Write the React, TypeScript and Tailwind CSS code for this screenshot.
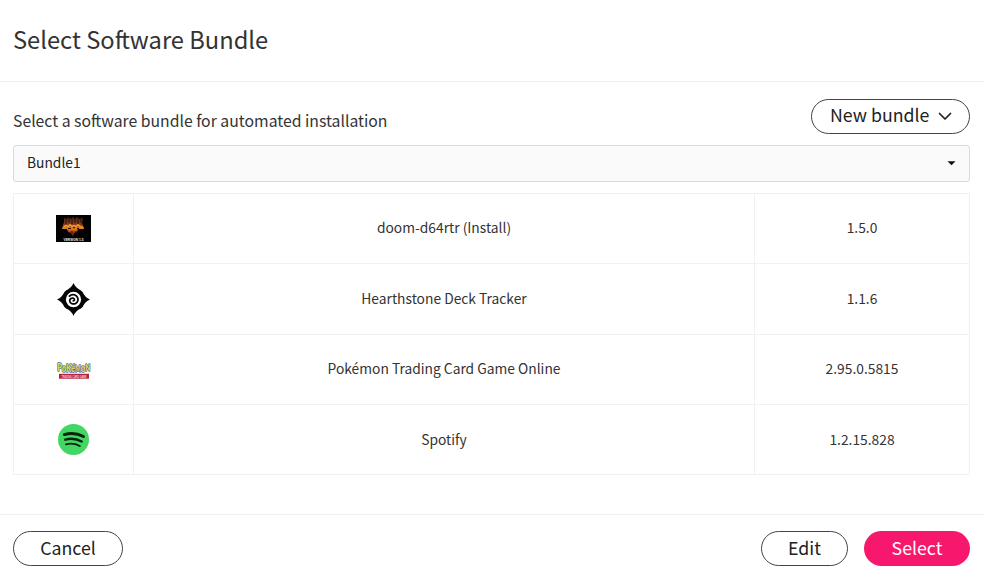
import type { ReactNode } from "react";

function DoomIcon() {
  return (
    <svg width="35" height="27" viewBox="0 0 35 27">
      <defs>
        <linearGradient id="flame" x1="0" y1="0" x2="0" y2="1">
          <stop offset="0" stopColor="#4a2418" />
          <stop offset="0.4" stopColor="#8c3f1c" />
          <stop offset="0.58" stopColor="#ee8420" />
          <stop offset="0.75" stopColor="#a03a12" />
          <stop offset="1" stopColor="#4c1008" />
        </linearGradient>
      </defs>
      <rect width="35" height="27" fill="#020202" />
      <path d="M8 3l3 1 1-2 2 2 3-2 2 2 2-2 2 2 4-1-1 5 2 6-6 0-1 3-3 1-1 4-2-4-3-1-1-3-5 0 2-7z" fill="url(#flame)" />
      <path d="M10 4v5M13 3v5M16 3v6M19 3v5M22 4v5M25 4v4" stroke="#2a100b" strokeWidth="1" />
      <path d="M7.500 12.500l2.500-2 2 1 2-2 2 2 2-1 2 1 2-2 2 2 3.500 1" fill="none" stroke="#ffa62c" strokeWidth="1.2" />
      <path d="M12 13.500h3M17 12.800h2M21 13.500h2M15 17h2M19 17h2" stroke="#280604" strokeWidth="1.1" />
      <text x="17.5" y="26" textAnchor="middle" textLength="20" lengthAdjust="spacingAndGlyphs" fontSize="4" fontWeight="700" fill="#f0f0f0" fontFamily="Liberation Sans, sans-serif">VERSION 1.5</text>
    </svg>
  );
}

function HearthstoneIcon() {
  return (
    <svg width="33" height="33" viewBox="0 0 32 32">
      <path d="M16 0Q18 5 23.200 7.200L24.800 8.800Q27 14 32 16Q27 18 24.800 23.200L23.200 24.800Q18 27 16 32Q14 27 8.800 24.800L7.200 23.200Q5 18 0 16Q5 14 7.200 8.800L8.800 7.200Q14 5 16 0Z" fill="#050505" />
      <circle cx="16" cy="16" r="7.400" fill="#fff" />
      <path d="M12 12.800C14 10.900 17.300 10.900 19.200 12.900C21.300 15.200 20.500 18.800 17.800 20C15.200 21 12.400 19.600 12.300 17.200C12.200 15.200 14.400 14.100 16 14.800C17.300 15.500 17.300 17.200 15.800 17.400" fill="none" stroke="#050505" strokeWidth="1.700" strokeLinecap="round" />
    </svg>
  );
}

function PokemonIcon() {
  return (
    <svg className="overflow-visible" width="35" height="20" viewBox="0 0 35 20">
      <rect x="3" y="13.800" width="30" height="4.900" fill="#b5233f" />
      <text x="18" y="17.500" textAnchor="middle" textLength="25" lengthAdjust="spacingAndGlyphs" fontSize="3" fontWeight="700" fill="#f2d3da" fontFamily="Liberation Sans, sans-serif">TRADING CARD GAME</text>
      <text x="1.200" y="10.800" textLength="33" lengthAdjust="spacingAndGlyphs" fontSize="10.500" fontWeight="900" fill="#ecd64a" stroke="#41719b" strokeWidth="1.500" strokeLinejoin="round" paintOrder="stroke" fontFamily="Lato, sans-serif">
        P<tspan dy="1">o</tspan>K<tspan dy=".4">é</tspan><tspan fontSize="8.500">M</tspan><tspan dy="-.4">o</tspan><tspan dy="-.4" fontSize="9">N</tspan>
      </text>
    </svg>
  );
}

function SpotifyIcon() {
  return (
    <svg width="31" height="31" viewBox="0 0 31 31">
      <circle cx="15.500" cy="15.500" r="15.500" fill="#42d663" />
      <g fill="none" stroke="#06230d" strokeLinecap="round">
        <path d="M6.300 10.600Q16.500 7.800 25.500 12.500" strokeWidth="2.900" />
        <path d="M7.200 15.700Q16 13.300 23.700 17.500" strokeWidth="2.400" />
        <path d="M8 20.300Q15.500 18.400 21.800 22" strokeWidth="1.900" />
      </g>
    </svg>
  );
}

const rows: { icon: ReactNode; name: string; version: string; height: string; inset: string }[] = [
  { icon: <DoomIcon />, name: "doom-d64rtr (Install)", version: "1.5.0", height: "h-[70px]", inset: "pb-0.5" },
  { icon: <HearthstoneIcon />, name: "Hearthstone Deck Tracker", version: "1.1.6", height: "h-[71px]", inset: "pb-0.5" },
  { icon: <PokemonIcon />, name: "Pokémon Trading Card Game Online", version: "2.95.0.5815", height: "h-[70px]", inset: "pb-0.5" },
  { icon: <SpotifyIcon />, name: "Spotify", version: "1.2.15.828", height: "h-[70px]", inset: "pb-0" },
];

export default function App() {
  return (
    <div className="flex h-[580px] w-[984px] flex-col bg-white font-['Noto_Sans_CJK_SC',sans-serif] text-[#333]">
      <header className="flex h-[82px] shrink-0 items-center border-b border-[#f1f1f1] pb-[3px] pl-[13px]">
        <h1 className="text-[23.7px] leading-8">
          Select So<span className="tracking-[-0.06em]">f</span>tware Bundle
        </h1>
      </header>

      <main className="flex h-[432px] shrink-0 flex-col pl-[13px] pr-[14px] pt-[17px]">
        <div className="flex h-[35px] items-center justify-between">
          <p className="pt-[9px] text-[15.77px] leading-6">
            Select a so<span className="tracking-[-0.06em]">f</span>tware bundle for automated installation
          </p>
          <button className="flex h-[35px] w-[159px] items-center rounded-full border border-[#444] pl-[18px] text-[17.75px] leading-6 text-[#222]">
            <span className="pb-[5px]">New bundle</span>
            <svg className="ml-[9px]" width="14" height="9" viewBox="0 0 14 9" fill="none" stroke="#222" strokeWidth="1.7" strokeLinecap="round" strokeLinejoin="round">
              <path d="M1.500 1.500L7 7L12.500 1.500" />
            </svg>
          </button>
        </div>

        <div className="mt-[11px] flex h-[37px] items-center justify-between rounded-[3px] border border-[#d9d9d9] bg-[#fafafa] pl-[13px] pr-[13px] text-[13.8px] text-[#222]">
          <span className="pb-0.5">Bundle1</span>
          <svg width="9" height="5" viewBox="0 0 9 5"><path d="M.5.300h8L4.500 4.300z" fill="#111" /></svg>
        </div>

        <div className="mt-[11px] border-l border-t border-[#f1f1f1] text-[13.8px]">
          {rows.map((row) => (
            <div key={row.name} className={`flex ${row.height}`}>
              <div className="flex w-[120px] items-center justify-center border-b border-r border-[#f1f1f1]">{row.icon}</div>
              <div className={`flex w-[621px] items-center justify-center border-b border-r border-[#f1f1f1] ${row.inset}`}>{row.name}</div>
              <div className={`flex flex-1 items-center justify-center border-b border-r border-[#f1f1f1] ${row.inset}`}>{row.version}</div>
            </div>
          ))}
        </div>
      </main>

      <footer className="flex h-[66px] shrink-0 items-start border-t border-[#f1f1f1] pl-[13px] pr-[14px] pt-4 text-[17.75px] leading-6">
        <button className="flex h-[35px] w-[110px] items-center justify-center rounded-full border border-[#444] pb-[3px] text-[#222]">Cancel</button>
        <button className="ml-auto flex h-[35px] w-[87px] items-center justify-center rounded-full border border-[#444] pb-[3px] text-[#222]">Edit</button>
        <button className="ml-4 flex h-[35px] w-[106px] items-center justify-center rounded-full bg-[#f7176c] pb-[3px] text-white">Select</button>
      </footer>
    </div>
  );
}
